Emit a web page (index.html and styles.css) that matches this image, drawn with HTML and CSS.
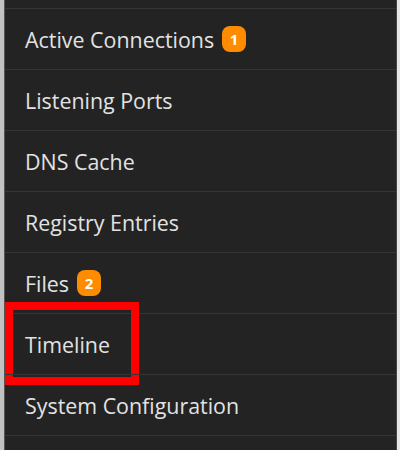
FILE: index.html
```html
<!DOCTYPE html>
<html lang="en">
<head>
    <meta charset="UTF-8">
    <title>Menu</title>
    <link rel="stylesheet" href="styles.css">
</head>
<body>
    <div class="frame">
        <div class="edge-left"></div>
        <nav class="menu">
            <div class="menu-top"></div>
            <div class="menu-item">Active Connections <span class="badge">1</span></div>
            <div class="menu-item">Listening Ports</div>
            <div class="menu-item">DNS Cache</div>
            <div class="menu-item">Registry Entries</div>
            <div class="menu-item">Files <span class="badge">2</span></div>
            <div class="menu-item highlighted">Timeline</div>
            <div class="menu-item">System Configuration</div>
            <div class="menu-item"></div>
        </nav>
        <div class="edge-right"></div>
    </div>
</body>
</html>
```

FILE: styles.css
```css
body {
    margin: 0;
    font-family: "Open Sans", "Noto Sans", sans-serif;
    background-color: #e9e9e9;
    overflow: hidden;
}
.frame {
    display: flex;
    height: 450px;
}
.edge-left {
    width: 4px;
    background-color: #c2c2c2;
}
.edge-right {
    width: 3px;
    background-color: #e6e6e6;
}
.menu {
    flex: 1;
    background-color: #232323;
    border-left: 1px solid #555;
    border-right: 1px solid #444;
    overflow: hidden;
}
.menu-top {
    height: 8px;
}
.menu-item {
    position: relative;
    display: flex;
    align-items: center;
    gap: 8px;
    height: 60px;
    padding-left: 20px;
    border-top: 1px solid #353535;
    color: #e2e2e2;
    font-size: 21.4px;
}
.badge {
    display: inline-flex;
    align-items: center;
    justify-content: center;
    width: 24px;
    height: 26px;
    border-radius: 8px;
    background-color: #ff8c00;
    color: #fff;
    font-weight: bold;
    font-size: 15px;
}
.highlighted::after {
    content: "";
    position: absolute;
    left: 0;
    top: -12px;
    width: 118px;
    height: 67px;
    border: 8px solid #f00;
}
```
